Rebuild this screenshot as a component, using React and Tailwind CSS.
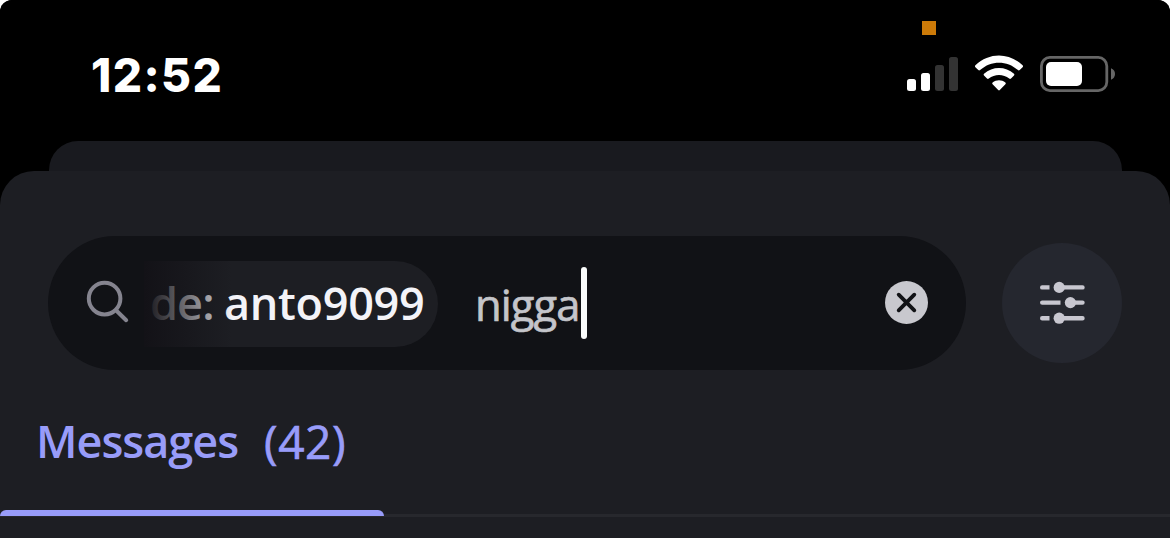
import React from "react";

function StatusBar() {
  return (
    <header className="relative flex h-[141px] items-start justify-between bg-black pl-[91px] pr-[54px] pt-[47px]">
      <time className="font-['Inter',sans-serif] text-[46px] font-extrabold leading-[56px] tracking-[1.4px] text-white">12:52</time>
      <span className="absolute left-[922px] top-[21px] size-[14px] bg-[#cc7a08]" />
      <svg className="mt-[7px] h-[38px] w-[210px]" viewBox="906 54 210 38" fill="none">
        <rect x="907" y="79" width="9" height="12" rx="2.5" fill="#fff" />
        <rect x="921" y="73" width="9" height="18" rx="2.5" fill="#fff" />
        <rect x="935" y="65" width="9" height="26" rx="2.5" fill="#333" />
        <rect x="949" y="57" width="9" height="34" rx="2.5" fill="#333" />
        <path d="M975.4 65.3C989 52.2 1009 52.2 1022.6 65.3Q1023.5 66.3 1022.6 67.2L1019.7 70.1Q1018.8 71 1017.9 70.1C1007 60.3 991 60.3 980.1 70.1Q979.2 71 978.3 70.1L975.4 67.2Q974.5 66.3 975.4 65.3Z" fill="#fff" />
        <path d="M984 73.8C992.5 66.2 1005.5 66.2 1014 73.8Q1014.9 74.7 1014 75.6L1011 78.6Q1010.1 79.5 1009.2 78.6C1003.5 73.7 994.5 73.7 988.8 78.6Q987.9 79.5 987 78.6L984 75.6Q983.1 74.7 984 73.8Z" fill="#fff" />
        <path d="M992.6 82.4C996.3 79.4 1001.7 79.4 1005.4 82.4Q1006.3 83.3 1005.4 84.2L999.8 90Q999 90.9 998.2 90L992.6 84.2Q991.7 83.3 992.6 82.4Z" fill="#fff" />
        <rect x="1041.4" y="57.4" width="65.4" height="33.2" rx="8.5" stroke="#666" strokeWidth="2.8" />
        <rect x="1046" y="62" width="36" height="24" rx="5" fill="#fff" />
        <path d="M1111 68.3Q1115 70 1115 74T1111 79.7Z" fill="#666" />
      </svg>
    </header>
  );
}

function SearchField() {
  return (
    <div className="flex h-[134px] w-[918px] items-center rounded-full bg-[#111216] pl-[38px] pr-[38px]">
      <svg className="mb-0.5 h-[44px] w-[44px] shrink-0" viewBox="86 280 44 44" fill="none" stroke="#85848f" strokeWidth="4" strokeLinecap="round">
        <circle cx="104.6" cy="298.6" r="15.8" />
        <path d="M116 310.2L126.2 320.2" />
      </svg>
      <div className="relative ml-[14px] mt-0.5 flex h-[86px] w-[294px] items-center overflow-hidden rounded-r-full bg-[#1d1e23] pl-[6px]">
        <span className="w-[74px] shrink-0 whitespace-pre pb-0.5 text-[45px] font-semibold leading-[60px] tracking-[-0.9px] text-[#d6d6dc]">de:</span>
        <span className="whitespace-pre pb-0.5 text-[45px] font-semibold leading-[60px] tracking-[-0.3px] text-[#f3f3f8]">anto9099</span>
        <span className="absolute inset-y-0 left-0 w-[88px] bg-linear-to-r from-[#131217] to-[#1d1e2300]" />
      </div>
      <span className="ml-[37px] w-[106px] whitespace-pre pt-1 text-[43.5px] leading-[60px] tracking-[-0.9px] text-[#c4c5ca] [-webkit-text-stroke:0.7px_#c4c5ca]">nigga</span>
      <span className="h-[72px] w-[6px] shrink-0 rounded-full bg-[#fafcfc]" />
      <svg className="mb-0.5 ml-auto size-[43px]" viewBox="0 0 43 43" fill="none">
        <circle cx="21.5" cy="21.5" r="21.5" fill="#c8c8ce" />
        <path d="M13.7 13.7L29.3 29.3M29.3 13.7L13.7 29.3" stroke="#111216" strokeWidth="3.8" strokeLinecap="round" />
      </svg>
    </div>
  );
}

function FilterButton() {
  return (
    <button className="ml-9 flex size-[120px] items-center justify-center rounded-full bg-[#25272f]" aria-label="Filter">
      <svg className="ml-0.5 size-[46px]" viewBox="0 0 46 46" fill="#c8c7d0">
        <path d="M2.2 5.2H9.5V9.6H2.2A2.2 2.2 0 0 1 2.2 5.2ZM19 5.2H42.5A2.2 2.2 0 0 1 42.5 9.6H19Z" />
        <circle cx="19.2" cy="7.4" r="5.6" />
        <path d="M2.2 20.4H20.5V24.8H2.2A2.2 2.2 0 0 1 2.2 20.4ZM30 20.4H42.5A2.2 2.2 0 0 1 42.5 24.8H30Z" />
        <circle cx="30.4" cy="22.6" r="5.6" />
        <path d="M2.2 36H9.5V40.4H2.2A2.2 2.2 0 0 1 2.2 36ZM19 36H42.5A2.2 2.2 0 0 1 42.5 40.4H19Z" />
        <circle cx="19.2" cy="38.2" r="5.6" />
      </svg>
    </button>
  );
}

export default function App() {
  return (
    <div className="h-[538px] w-[1170px] overflow-hidden bg-white font-['Open_Sans',sans-serif]">
      <div className="flex h-full flex-col overflow-hidden rounded-t-[12px] bg-black">
        <StatusBar />
        <div className="mx-auto h-[30px] w-[1073px] shrink-0 rounded-t-[29px] bg-[#191a1f]" />
        <main className="flex flex-1 flex-col rounded-t-[34px] bg-[#1d1e23] pt-[65px]">
          <div className="flex items-center pl-12">
            <SearchField />
            <FilterButton />
          </div>
          <div className="flex h-[147px] items-start border-b-[3px] border-[#27282d]">
            <div className="relative flex h-[146px] w-[384px] items-start pl-[36px] pt-[41px] text-[45px] leading-[60px] text-[#989cf9]">
              <span className="w-[228px] whitespace-pre font-semibold tracking-[-1px]">Messages</span>
              <span className="whitespace-pre text-[46px] tracking-[0.6px] [-webkit-text-stroke:0.7px_#989cf9]">(42)</span>
              <span className="absolute bottom-0 left-0 h-[6px] w-full rounded-t-[6px] bg-[#989cf9]" />
            </div>
          </div>
        </main>
      </div>
    </div>
  );
}
